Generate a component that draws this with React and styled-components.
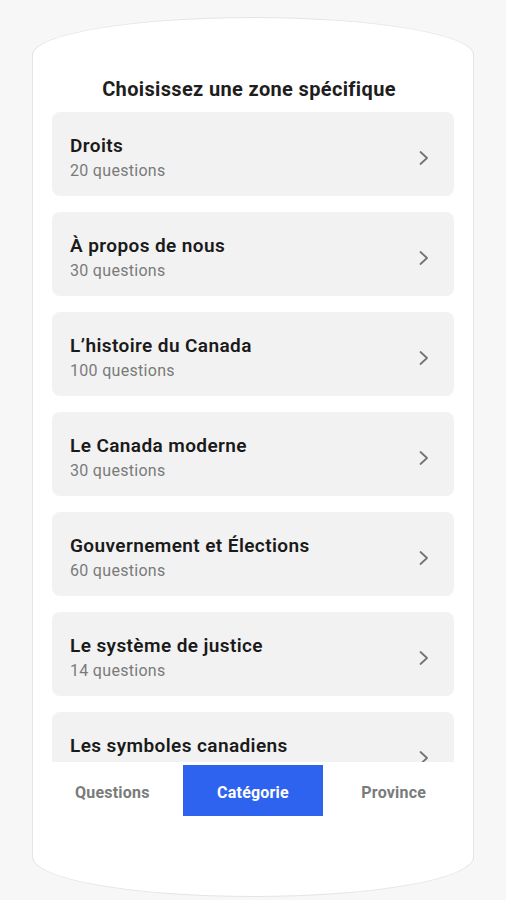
import React from 'react';
import styled, { createGlobalStyle } from 'styled-components';

const GlobalStyle = createGlobalStyle`
    html, body {
        margin: 0;
        padding: 0;
        background: #f7f7f7;
        font-family: Roboto, 'Liberation Sans', sans-serif;
    }
`

const Page = styled.div`
    width: 506px;
    height: 900px;
    box-sizing: border-box;
    padding-top: 17px;
    display: flex;
    justify-content: center;
    overflow: hidden;
`

const Phone = styled.div`
    width: 442px;
    height: 880px;
    box-sizing: border-box;
    background: #ffffff;
    border: 1px solid #e4e4e4;
    border-radius: 50% 50% 50% 50% / 38px 38px 40px 40px;
    display: flex;
    flex-direction: column;
    overflow: hidden;
`

const Heading = styled.h2`
    margin: 59px 0 11px;
    padding-right: 8px;
    font-size: 20px;
    line-height: 24px;
    font-weight: 700;
    letter-spacing: 0.35px;
    color: #1e1e1e;
    text-align: center;
`

const List = styled.div`
    height: 650px;
    padding: 0 19px 0 19px;
    display: flex;
    flex-direction: column;
    gap: 16px;
    overflow: hidden;
    flex-shrink: 0;
`

const Card = styled.div`
    flex-shrink: 0;
    height: 84px;
    box-sizing: border-box;
    border-radius: 8px;
    background: #f2f2f2;
    padding: 7px 24px 0 18px;
    display: flex;
    align-items: center;
    justify-content: space-between;
`

const Info = styled.div`
    display: flex;
    flex-direction: column;
`

const Title = styled.div`
    font-size: 19px;
    line-height: 24px;
    font-weight: 600;
    letter-spacing: 0.4px;
    color: #1a1a1a;
`

const Count = styled.div`
    margin-top: 2px;
    font-size: 16px;
    line-height: 22px;
    letter-spacing: 0.3px;
    color: #7a7a7a;
`

const Tabs = styled.nav`
    display: grid;
    grid-template-columns: repeat(3, 1fr);
    margin-top: 3px;
    padding: 0 9px;
    height: 51px;
`

const Tab = styled.div`
    display: flex;
    align-items: center;
    justify-content: center;
    padding-top: 4px;
    font-size: 16px;
    font-weight: 700;
    letter-spacing: 0.2px;
    color: ${p => (p.$active ? '#ffffff' : '#7b7b7b')};
    background: ${p => (p.$active ? '#2d63ef' : 'transparent')};
`

const Chevron = () => (
    <svg width="12" height="16" viewBox="0 0 12 16" fill="none">
        <polyline points="2.5,2 9,8 2.5,14" stroke="#737373" strokeWidth="1.8" strokeLinecap="round" strokeLinejoin="round" />
    </svg>
)

const categories = [
    { title: 'Droits', count: 20 },
    { title: 'À propos de nous', count: 30 },
    { title: 'L’histoire du Canada', count: 100 },
    { title: 'Le Canada moderne', count: 30 },
    { title: 'Gouvernement et Élections', count: 60 },
    { title: 'Le système de justice', count: 14 },
    { title: 'Les symboles canadiens', count: 20 },
]

const App = () => {
    return (
        <Page>
            <GlobalStyle />
            <Phone>
                <Heading>Choisissez une zone spécifique</Heading>
                <List>
                    {categories.map(c => (
                        <Card key={c.title}>
                            <Info>
                                <Title>{c.title}</Title>
                                <Count>{c.count} questions</Count>
                            </Info>
                            <Chevron />
                        </Card>
                    ))}
                </List>
                <Tabs>
                    <Tab>Questions</Tab>
                    <Tab $active>Catégorie</Tab>
                    <Tab>Province</Tab>
                </Tabs>
            </Phone>
        </Page>
    )
}

export default App;
